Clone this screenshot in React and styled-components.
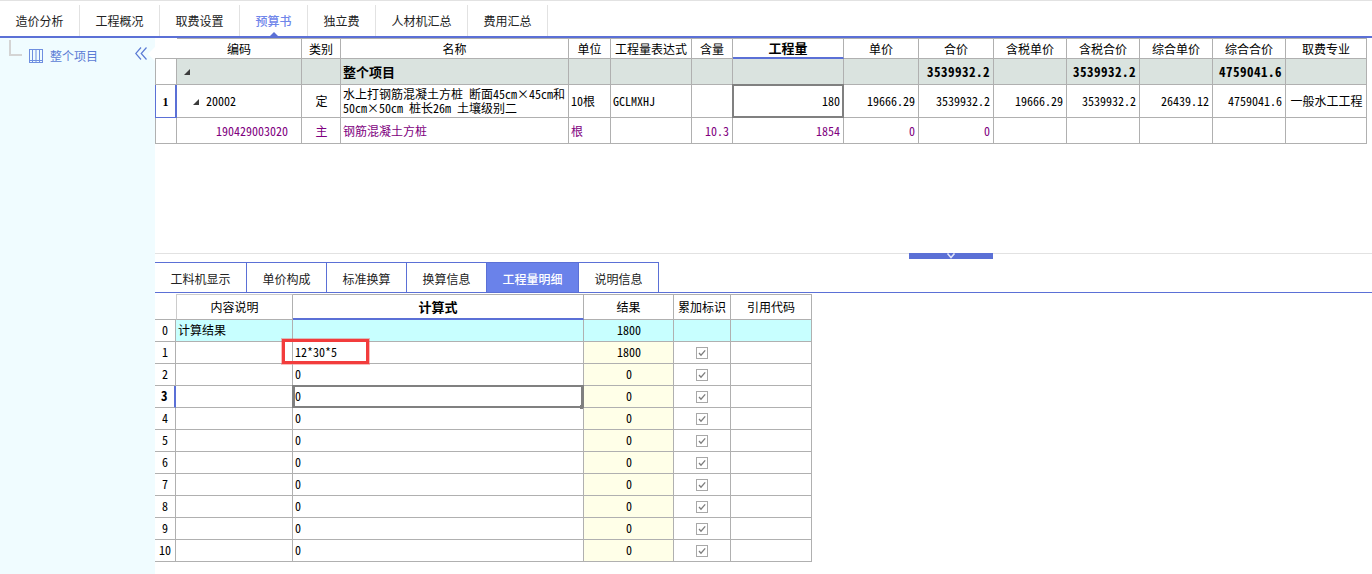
import React from 'react';
import styled, { createGlobalStyle } from 'styled-components';

const GlobalStyle = createGlobalStyle`
  html, body {
    margin: 0;
    padding: 0;
    height: 100%;
    overflow: hidden;
    background: #fff;
  }
  body {
    font-family: "Noto Sans CJK SC", "Liberation Sans", sans-serif;
    font-size: 12px;
    color: #000;
  }
`;

const BLUE = '#5b70d6';
const LINE = '#b0b0b0';
const PURPLE = '#800080';

const Page = styled.div`
  width: 1372px;
  height: 574px;
  display: flex;
  flex-direction: column;
  overflow: hidden;
  border-top: 1px solid #e2e2e2;
  box-sizing: border-box;
`;

const TopTabs = styled.div`
  display: flex;
  height: 35px;
  flex: none;
  border-bottom: 2px solid ${BLUE};
`;

const TopTab = styled.div`
  position: relative;
  display: flex;
  align-items: center;
  justify-content: center;
  box-sizing: border-box;
  width: ${(p) => p.$w}px;
  height: 31px;
  margin-top: 4px;
  border-right: 1px solid #e2e2e2;
  color: ${(p) => (p.$active ? '#6f86ea' : '#222')};
  font-weight: ${(p) => (p.$active ? 500 : 400)};

  ${(p) =>
    p.$active &&
    `&::after {
      content: '';
      position: absolute;
      left: 50%;
      bottom: 0;
      margin-left: -4px;
      border-left: 4px solid transparent;
      border-right: 4px solid transparent;
      border-bottom: 4px solid ${BLUE};
    }`}
`;

const Body = styled.div`
  flex: 1;
  display: flex;
  min-height: 0;
`;

const Sidebar = styled.aside`
  position: relative;
  flex: none;
  width: 155px;
  box-sizing: border-box;
  background: #f0fcff;
`;

const TreeRow = styled.div`
  display: flex;
  align-items: center;
  height: 25px;
  padding: 5px 0 0 9px;
  color: ${BLUE};
`;

const TreeLine = styled.span`
  width: 13px;
  height: 16px;
  margin: -15px 7px 0 0;
  border-left: 2px solid #d4d4d4;
  border-bottom: 2px solid #d4d4d4;
  box-sizing: border-box;
`;

const TreeLabel = styled.span`
  margin-left: 7px;
  color: #5b7bd5;
`;

const Collapse = styled.svg`
  position: absolute;
  top: 9px;
  left: 135px;
`;

const Notch = styled.span`
  position: absolute;
  top: 9px;
  right: 0;
  border-top: 7px solid transparent;
  border-bottom: 7px solid transparent;
  border-right: 7px solid #fff;
`;

const Main = styled.main`
  flex: 1;
  min-width: 0;
  display: flex;
  flex-direction: column;
`;

const UpperPane = styled.div`
  height: 215px;
  flex: none;
  background: #fff;
`;

const Splitter = styled.div`
  position: relative;
  height: 8px;
  flex: none;
  border-top: 1px solid #e2e2e2;
`;

const SplitHandle = styled.div`
  position: absolute;
  top: -1px;
  left: 754px;
  width: 84px;
  height: 6px;
  background: ${BLUE};
  display: flex;
  justify-content: center;
`;

const LowerTabs = styled.div`
  display: flex;
  height: 31px;
  flex: none;
  box-sizing: border-box;
  border-bottom: 1px solid ${BLUE};
`;

const LowerTab = styled.div`
  display: flex;
  align-items: center;
  justify-content: center;
  box-sizing: border-box;
  width: ${(p) => p.$w}px;
  height: 30px;
  padding-top: 2px;
  border-top: 1px solid ${BLUE};
  border-right: 1px solid ${BLUE};
  background: ${(p) => (p.$active ? '#6a82ea' : '#fff')};
  color: ${(p) => (p.$active ? '#fff' : '#222')};
  font-weight: ${(p) => (p.$active ? 500 : 400)};
`;

const Grid = styled.table`
  border-collapse: separate;
  border-spacing: 0;
  table-layout: fixed;
  width: ${(p) => p.$w}px;
  margin-top: ${(p) => p.$top || 0}px;
`;

const Th = styled.th`
  box-sizing: border-box;
  height: ${(p) => p.$h}px;
  padding: 0;
  line-height: 14px;
  font-weight: ${(p) => (p.$strong ? 700 : 400)};
  font-size: ${(p) => (p.$strong ? 13 : 12)}px;
  text-align: center;
  border-top: ${(p) => (p.$bare ? 'none' : `1px solid ${p.$soft ? '#ccc' : LINE}`)};
  border-right: ${(p) => (p.$bare ? 'none' : `1px solid ${LINE}`)};
  border-bottom: ${(p) => (p.$accent ? `2px solid ${BLUE}` : `1px solid ${LINE}`)};
  border-left: ${(p) => (p.$soft ? '1px solid #ccc' : 'none')};
`;

const Td = styled.td`
  position: relative;
  box-sizing: border-box;
  height: ${(p) => p.$h}px;
  padding: 0 ${(p) => (p.$align === 'right' ? 3 : 1)}px ${(p) => (p.$lift ? 2 : 0)}px ${(p) => (p.$pad ?? 2)}px;
  text-align: ${(p) => p.$align || 'left'};
  color: ${(p) => (p.$purple ? PURPLE : 'inherit')};
  background: ${(p) => p.$bg || 'transparent'};
  border-right: 1px solid ${LINE};
  border-bottom: 1px solid ${LINE};
  border-left: ${(p) => (p.$first ? `1px solid ${LINE}` : 'none')};
  line-height: 14px;
  white-space: nowrap;
  overflow: visible;
`;

const RowHead = styled(Td)`
  padding: 0 0 ${(p) => (p.$lift ? 2 : 0)}px;
  text-align: center;
  border-left: ${(p) => (p.$first ? `1px solid ${p.$current ? BLUE : LINE}` : 'none')};
  border-right: ${(p) => (p.$current ? `2px solid ${BLUE}` : `1px solid ${LINE}`)};
  border-bottom: ${(p) => (p.$current && p.$first ? `1px solid ${BLUE}` : `1px solid ${LINE}`)};
`;

/* half-width latin, the old grid font draws every digit 6px wide */
const Mono = styled.span`
  font-feature-settings: "hwid";
  font-size: ${(p) => (p.$bold ? 13 : 12)}px;
  letter-spacing: ${(p) => (p.$bold ? 0.5 : 0)}px;
  font-weight: ${(p) => (p.$bold ? 700 : 400)};
`;

const RowTitle = styled.strong`
  font-size: 13px;
`;

const RowNumber = styled.strong`
  font-family: "Liberation Serif", serif;
`;

const Selected = styled.span`
  position: absolute;
  inset: -1px;
  border: 2px solid #808080;
  border-left-width: ${(p) => (p.$handle ? 3 : 2)}px;
  border-right-width: ${(p) => (p.$handle ? 3 : 2)}px;
  pointer-events: none;

  ${(p) =>
    p.$handle &&
    `&::after {
      content: '';
      position: absolute;
      right: -3px;
      bottom: -3px;
      width: 4px;
      height: 4px;
      background: #808080;
    }`}
`;

const Marker = styled.span`
  position: absolute;
  left: -11px;
  top: -3px;
  width: 87px;
  height: 25px;
  box-sizing: border-box;
  border: 3px solid #f23c3c;
  outline: 1px solid rgba(242, 60, 60, 0.35);
  pointer-events: none;
`;

const Triangle = styled.svg`
  margin: 0 ${(p) => p.$gap}px 2px ${(p) => p.$indent}px;
  vertical-align: middle;
`;

const Check = styled.svg`
  display: block;
  margin: 0 auto;
`;

const Expander = ({ indent, gap }) => (
  <Triangle width="6" height="6" viewBox="0 0 6 6" $indent={indent} $gap={gap}>
    <polygon points="0,6 6,0 6,6" fill="#3c3c3c" />
  </Triangle>
);

const CheckBox = () => (
  <Check width="12" height="12" viewBox="0 0 12 12">
    <rect x="0.5" y="0.5" width="11" height="11" fill="#fff" stroke="#a8a8a8" />
    <path d="M3 6 L5 8.2 L9.2 3.4" fill="none" stroke="#7d7d7d" strokeWidth="1.3" />
  </Check>
);

const topCols = [22, 125, 39, 228, 42, 81, 41, 111, 75, 75, 73, 73, 73, 73, 81];
const topHeads = ['', '编码', '类别', '名称', '单位', '工程量表达式', '含量', '工程量', '单价', '合价', '含税单价', '含税合价', '综合单价', '综合合价', '取费专业'];

const lowerCols = [21, 117, 291, 90, 57, 81];
const lowerRows = [1, 2, 3, 4, 5, 6, 7, 8, 9, 10];

const Cols = ({ widths }) => (
  <colgroup>
    {widths.map((w, i) => (
      <col key={i} width={w} />
    ))}
  </colgroup>
);

const TopGrid = () => (
  <Grid $w={1212}>
    <Cols widths={topCols} />
    <thead>
      <tr>
        {topHeads.map((h, i) => (
          <Th key={i} $h={21} $bare={i === 0} $strong={h === '工程量'} $accent={h === '工程量'}>
            {h}
          </Th>
        ))}
      </tr>
    </thead>
    <tbody>
      <tr>
        <RowHead as="td" $h={26} $first />
        <Td $h={26} $bg="#dae3df" $pad={6}><Expander indent={1} gap={0} /></Td>
        <Td $h={26} $bg="#dae3df" />
        <Td $h={26} $bg="#dae3df"><RowTitle>整个项目</RowTitle></Td>
        <Td $h={26} $bg="#dae3df" />
        <Td $h={26} $bg="#dae3df" />
        <Td $h={26} $bg="#dae3df" />
        <Td $h={26} $bg="#dae3df" />
        <Td $h={26} $bg="#dae3df" />
        <Td $h={26} $bg="#dae3df" $align="right"><Mono $bold>3539932.2</Mono></Td>
        <Td $h={26} $bg="#dae3df" />
        <Td $h={26} $bg="#dae3df" $align="right"><Mono $bold>3539932.2</Mono></Td>
        <Td $h={26} $bg="#dae3df" />
        <Td $h={26} $bg="#dae3df" $align="right"><Mono $bold>4759041.6</Mono></Td>
        <Td $h={26} $bg="#dae3df" />
      </tr>
      <tr>
        <RowHead $h={33} $first $current><RowNumber>1</RowNumber></RowHead>
        <Td $h={33} $pad={16}><Expander indent={0} gap={7} /><Mono>20002</Mono></Td>
        <Td $h={33} $align="center">定</Td>
        <Td $h={33}>
          水上打钢筋混凝土方桩<Mono> </Mono>断面<Mono>45cm</Mono>×<Mono>45cm</Mono>和<br />
          <Mono>50cm</Mono>×<Mono>50cm 桩长26m 土壤级别二</Mono>
        </Td>
        <Td $h={33}><Mono>10</Mono>根</Td>
        <Td $h={33}><Mono>GCLMXHJ</Mono></Td>
        <Td $h={33} />
        <Td $h={33} $align="right"><Mono>180</Mono><Selected /></Td>
        <Td $h={33} $align="right"><Mono>19666.29</Mono></Td>
        <Td $h={33} $align="right"><Mono>3539932.2</Mono></Td>
        <Td $h={33} $align="right"><Mono>19666.29</Mono></Td>
        <Td $h={33} $align="right"><Mono>3539932.2</Mono></Td>
        <Td $h={33} $align="right"><Mono>26439.12</Mono></Td>
        <Td $h={33} $align="right"><Mono>4759041.6</Mono></Td>
        <Td $h={33} $align="center">一般水工工程</Td>
      </tr>
      <tr>
        <RowHead $h={26} $first />
        <Td $h={26} $purple $pad={39}><Mono>190429003020</Mono></Td>
        <Td $h={26} $purple $align="center">主</Td>
        <Td $h={26} $purple>钢筋混凝土方桩</Td>
        <Td $h={26} $purple>根</Td>
        <Td $h={26} />
        <Td $h={26} $purple $align="right"><Mono>10.3</Mono></Td>
        <Td $h={26} $purple $align="right"><Mono>1854</Mono></Td>
        <Td $h={26} $purple $align="right"><Mono>0</Mono></Td>
        <Td $h={26} $purple $align="right"><Mono>0</Mono></Td>
        <Td $h={26} />
        <Td $h={26} />
        <Td $h={26} />
        <Td $h={26} />
        <Td $h={26} />
      </tr>
    </tbody>
  </Grid>
);

const LowerGrid = () => (
  <Grid $w={657} $top={1}>
    <Cols widths={lowerCols} />
    <thead>
      <tr>
        <Th $h={26} $bare />
        <Th $h={26} $soft>内容说明</Th>
        <Th $h={26} $strong $accent>计算式</Th>
        <Th $h={26}>结果</Th>
        <Th $h={26}>累加标识</Th>
        <Th $h={26}>引用代码</Th>
      </tr>
    </thead>
    <tbody>
      <tr>
        <RowHead $h={22} $lift><Mono>0</Mono></RowHead>
        <Td $h={22} $lift $bg="#c8ffff">计算结果</Td>
        <Td $h={22} $bg="#c8ffff" />
        <Td $h={22} $lift $bg="#c8ffff" $align="center"><Mono>1800</Mono></Td>
        <Td $h={22} $bg="#c8ffff" />
        <Td $h={22} $bg="#c8ffff" />
      </tr>
      {lowerRows.map((n) => (
        <tr key={n}>
          <RowHead $h={22} $lift $current={n === 3}>
            <Mono $bold={n === 3}>{n}</Mono>
          </RowHead>
          <Td $h={22} />
          <Td $h={22} $lift>
            <Mono>{n === 1 ? '12*30*5' : '0'}</Mono>
            {n === 1 && <Marker />}
            {n === 3 && <Selected $handle />}
          </Td>
          <Td $h={22} $lift $bg="#ffffe8" $align="center"><Mono>{n === 1 ? '1800' : '0'}</Mono></Td>
          <Td $h={22} $pad={0}><CheckBox /></Td>
          <Td $h={22} />
        </tr>
      ))}
    </tbody>
  </Grid>
);

export default function App() {
  return (
    <>
      <GlobalStyle />
      <Page>
        <TopTabs>
          <TopTab $w={80}>造价分析</TopTab>
          <TopTab $w={80}>工程概况</TopTab>
          <TopTab $w={80}>取费设置</TopTab>
          <TopTab $w={68} $active>预算书</TopTab>
          <TopTab $w={68}>独立费</TopTab>
          <TopTab $w={92}>人材机汇总</TopTab>
          <TopTab $w={80}>费用汇总</TopTab>
        </TopTabs>
        <Body>
          <Sidebar>
            <TreeRow>
              <TreeLine />
              <svg width="14" height="14" viewBox="0 0 14 14" fill="none" stroke="#6f8fe0">
                <rect x="0.5" y="0.5" width="13" height="13" />
                <path d="M3.5 1V13M7 1V13M10.5 1V13M1 11.5H13" />
              </svg>
              <TreeLabel>整个项目</TreeLabel>
            </TreeRow>
            <Collapse width="12" height="13" viewBox="0 0 12 13" fill="none" stroke="#5b7bd5" strokeWidth="1.2">
              <path d="M6 0.5L0.7 6.5L6 12.5M11.5 0.5L6.2 6.5L11.5 12.5" />
            </Collapse>
            <Notch />
          </Sidebar>
          <Main>
            <UpperPane>
              <TopGrid />
            </UpperPane>
            <Splitter>
              <SplitHandle>
                <svg width="10" height="6" viewBox="0 0 10 6" fill="none" stroke="#dfe4fa" strokeWidth="1.6">
                  <path d="M1.5 0.5L5 4.5L8.5 0.5" />
                </svg>
              </SplitHandle>
            </Splitter>
            <LowerTabs>
              <LowerTab $w={92}>工料机显示</LowerTab>
              <LowerTab $w={80}>单价构成</LowerTab>
              <LowerTab $w={80}>标准换算</LowerTab>
              <LowerTab $w={80}>换算信息</LowerTab>
              <LowerTab $w={92} $active>工程量明细</LowerTab>
              <LowerTab $w={80}>说明信息</LowerTab>
            </LowerTabs>
            <LowerGrid />
          </Main>
        </Body>
      </Page>
    </>
  );
}
